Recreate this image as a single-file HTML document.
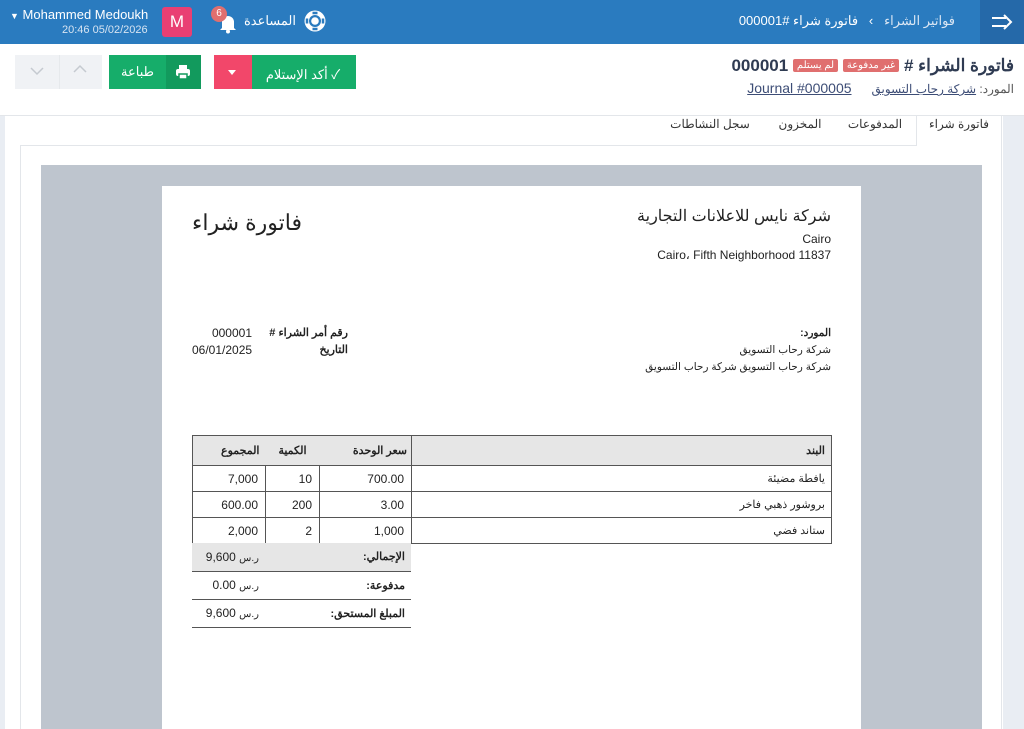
<!DOCTYPE html>
<html><head><meta charset="utf-8">
<style>
*{margin:0;padding:0;box-sizing:border-box}
body{width:1024px;height:729px;overflow:hidden;background:#e9edf3;font-family:"Liberation Sans","Noto Sans CJK SC",sans-serif;position:relative;color:#222}
.a{position:absolute}
.r{direction:rtl}
table{border-collapse:collapse}
td{font-size:12px}
.n{text-align:right;padding:0 7px}
.cur{font-size:10px}
</style></head><body>
<div class="a" style="left:0;top:0;width:1024px;height:44px;background:#2a7bbf"></div>
<div class="a" style="left:980px;top:0;width:44px;height:44px;background:#2569a9"></div>
<svg class="a" style="left:990px;top:12px" width="24" height="20" viewBox="0 0 24 20"><path d="M2 6h14M2 14h14M14 3l7 7-7 7" stroke="#fff" stroke-width="2" fill="none"/></svg>
<div class="a r" style="left:740px;top:13px;width:215px;font-size:13px;color:#fff;white-space:nowrap"><span style="color:#dbe7f4">فواتير الشراء</span>&nbsp;&nbsp; › &nbsp;&nbsp;فاتورة شراء #000001</div>
<svg class="a" style="left:303px;top:9px" width="24" height="24" viewBox="0 0 24 24"><circle cx="12" cy="12" r="10.5" fill="#fff"/><circle cx="12" cy="12" r="6" fill="#2a7bbf"/><circle cx="12" cy="12" r="3.8" fill="#fff"/><path d="M4 9.5v5M20 9.5v5M9.5 4h5M9.5 20h5" stroke="#2a7bbf" stroke-width="2.5"/></svg>
<div class="a r" style="left:244px;top:13px;width:52px;font-size:13px;color:#fff">المساعدة</div>
<svg class="a" style="left:218px;top:12px" width="20" height="22" viewBox="0 0 20 22"><path d="M4 16V10a6 6 0 0 1 12 0v6l2 2H2z" fill="#fff"/><circle cx="10" cy="19.5" r="2" fill="#fff"/></svg>
<div class="a" style="left:211px;top:6px;width:16px;height:16px;border-radius:8px;background:#e06f6f;color:#fff;font-size:10px;text-align:center;line-height:16px">6</div>
<div class="a" style="left:162px;top:7px;width:30px;height:30px;background:#e93f73;border-radius:3px;color:#fff;font-size:17px;text-align:center;line-height:30px">M</div>
<div class="a" style="left:10px;top:7px;font-size:13px;color:#fff;white-space:nowrap"><span style="font-size:9px">▼</span> Mohammed Medoukh</div>
<div class="a" style="left:62px;top:24px;font-size:11px;color:#d7e4f2">20:46 05/02/2026</div>
<div class="a" style="left:0;top:44px;width:1024px;height:72px;background:#fff;border-bottom:1px solid #e3e6ea"></div>
<div class="a" style="left:15px;top:55px;width:87px;height:34px;background:#f0f2f5"></div>
<div class="a" style="left:59px;top:55px;width:1px;height:34px;background:#e6e9ec"></div>
<svg class="a" style="left:30px;top:66px" width="14" height="10"><path d="M1 2l6 6 6-6" stroke="#c5cad0" stroke-width="1.5" fill="none"/></svg>
<svg class="a" style="left:73px;top:64px" width="14" height="10"><path d="M1 8l6-6 6 6" stroke="#c5cad0" stroke-width="1.5" fill="none"/></svg>
<div class="a" style="left:109px;top:55px;width:92px;height:34px;background:#16ad6a"></div>
<div class="a" style="left:166px;top:55px;width:35px;height:34px;background:#129a5d"></div>
<svg class="a" style="left:175px;top:64px" width="16" height="16" viewBox="0 0 16 16"><rect x="4" y="1" width="8" height="4" fill="#fff"/><rect x="1" y="5" width="14" height="7" rx="2" fill="#fff"/><rect x="4" y="10" width="8" height="5" fill="#fff" stroke="#129a5d" stroke-width="1.5"/></svg>
<div class="a r" style="left:115px;top:64px;width:45px;font-size:13px;color:#fff;text-align:center">طباعة</div>
<div class="a" style="left:214px;top:55px;width:142px;height:34px;background:#16ad6a"></div>
<div class="a" style="left:214px;top:55px;width:38px;height:34px;background:#f2476a"></div>
<div class="a" style="left:228px;top:70px;border:4px solid transparent;border-top:5px solid #fff"></div>
<div class="a r" style="left:255px;top:64px;width:96px;font-size:13px;color:#fff;text-align:center">✓ أكد الإستلام</div>
<div class="a r" style="left:600px;top:56px;width:414px;font-size:17px;font-weight:bold;color:#2f3b52;white-space:nowrap">فاتورة الشراء # <span style="display:inline-block;background:#e06f6f;color:#fff;font-size:10px;font-weight:normal;padding:1px 4px;border-radius:2px;vertical-align:3px">غير مدفوعة</span> <span style="display:inline-block;background:#e06f6f;color:#fff;font-size:10px;font-weight:normal;padding:1px 4px;border-radius:2px;vertical-align:3px">لم يستلم</span> 000001</div>
<div class="a r" style="left:700px;top:80px;width:314px;font-size:12px;color:#555;white-space:nowrap">المورد: <u style="color:#3d4d76">شركة رحاب التسويق</u> &nbsp;&nbsp;&nbsp;&nbsp; <u style="color:#3d4d76;font-size:14px">Journal #000005</u></div>
<div class="a" style="left:5px;top:116px;width:998px;height:613px;background:#fff"></div>
<div class="a" style="left:20px;top:145px;width:982px;height:584px;border:1px solid #e3e6ea;border-bottom:none"></div>
<div class="a" style="left:916px;top:116px;width:86px;height:30px;background:#fff;border-left:1px solid #e3e6ea;border-right:1px solid #e3e6ea"></div>
<div class="a r" style="left:920px;top:117px;width:78px;font-size:12px;text-align:center;color:#333">فاتورة شراء</div>
<div class="a r" style="left:840px;top:117px;width:70px;font-size:12px;text-align:center;color:#333">المدفوعات</div>
<div class="a r" style="left:765px;top:117px;width:70px;font-size:12px;text-align:center;color:#333">المخزون</div>
<div class="a r" style="left:660px;top:117px;width:100px;font-size:12px;text-align:center;color:#333">سجل النشاطات</div>
<div class="a" style="left:41px;top:165px;width:941px;height:564px;background:#bec5ce"></div>
<div class="a" style="left:162px;top:186px;width:699px;height:543px;background:#fff"></div>
<div class="a r" style="left:192px;top:210px;width:120px;font-size:22px;text-align:left">فاتورة شراء</div>
<div class="a r" style="left:530px;top:206px;width:301px;font-size:16px">شركة نايس للاعلانات التجارية</div>
<div class="a r" style="left:530px;top:232px;width:301px;font-size:12px">Cairo</div>
<div class="a" style="left:530px;top:248px;width:301px;font-size:12px;text-align:right">Cairo، Fifth Neighborhood 11837</div>
<div class="a r" style="left:560px;top:325px;width:271px;font-size:10.5px;line-height:17px"><b>المورد:</b><br>شركة رحاب التسويق<br>شركة رحاب التسويق شركة رحاب التسويق</div>
<div class="a r" style="left:262px;top:325px;width:86px;font-size:11px;font-weight:bold;line-height:17px">رقم أمر الشراء #<br>التاريخ</div>
<div class="a" style="left:192px;top:325px;width:60px;font-size:12px;line-height:17px;text-align:right">000001<br>06/01/2025</div>
<table class="a r" style="left:192px;top:435px;width:640px">
<tr style="background:#e6e6e6;height:30px"><td style="border:1px solid #555;padding:0 6px;font-weight:bold;font-size:11px">البند</td><td style="border:1px solid #555;border-left:none;border-right:none;width:92px;padding:0 4px;font-weight:bold;font-size:11px">سعر الوحدة</td><td style="border:1px solid #555;border-left:none;border-right:none;width:54px;text-align:center;font-weight:bold;font-size:11px">الكمية</td><td style="border:1px solid #555;border-right:none;width:73px;padding:0 6px;font-weight:bold;font-size:11px">المجموع</td></tr>
<tr style="height:26px"><td style="border:1px solid #555;padding:0 6px;font-size:11px">يافطة مضيئة</td><td class="n" style="border:1px solid #555;direction:ltr">700.00</td><td class="n" style="border:1px solid #555;direction:ltr">10</td><td class="n" style="border:1px solid #555;direction:ltr">7,000</td></tr>
<tr style="height:26px"><td style="border:1px solid #555;padding:0 6px;font-size:11px">بروشور ذهبي فاخر</td><td class="n" style="border:1px solid #555;direction:ltr">3.00</td><td class="n" style="border:1px solid #555;direction:ltr">200</td><td class="n" style="border:1px solid #555;direction:ltr">600.00</td></tr>
<tr style="height:26px"><td style="border:1px solid #555;padding:0 6px;font-size:11px">ستاند فضي</td><td class="n" style="border:1px solid #555;direction:ltr">1,000</td><td class="n" style="border:1px solid #555;direction:ltr">2</td><td class="n" style="border:1px solid #555;direction:ltr">2,000</td></tr>
</table>
<table class="a r" style="left:192px;top:543px;width:219px">
<tr style="height:28px;background:#e6e6e6"><td style="padding:0 6px;font-weight:bold;font-size:11px;border-bottom:1px solid #555">الإجمالي:</td><td class="n" style="border-bottom:1px solid #555;direction:ltr;width:74px"><span class="cur">ر.س</span> 9,600</td></tr>
<tr style="height:28px"><td style="padding:0 6px;font-weight:bold;font-size:11px;border-bottom:1px solid #555">مدفوعة:</td><td class="n" style="border-bottom:1px solid #555;direction:ltr"><span class="cur">ر.س</span> 0.00</td></tr>
<tr style="height:28px"><td style="padding:0 6px;font-weight:bold;font-size:11px;border-bottom:1px solid #555">المبلغ المستحق:</td><td class="n" style="border-bottom:1px solid #555;direction:ltr"><span class="cur">ر.س</span> 9,600</td></tr>
</table>
</body></html>
